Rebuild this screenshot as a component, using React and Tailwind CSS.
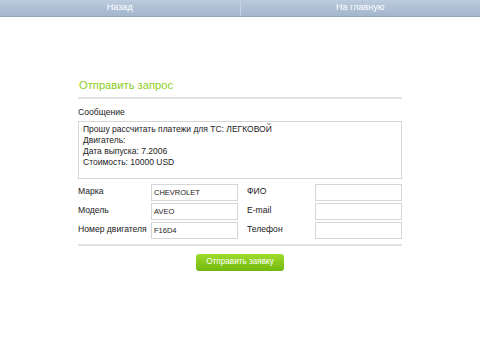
import React from 'react';

const font = { fontFamily: '"Liberation Sans", Arial, sans-serif' };

const Field = ({ label, value }) => (
  <div className="flex items-center h-[19px]">
    <span className="w-[73px] text-[8.6px] text-[#222] -mt-[2px]">{label}</span>
    <div className="w-[87px] h-[17px] border border-[#d6d6d6] bg-white flex items-center px-[2px] text-[7.5px] text-[#222]">
      {value}
    </div>
  </div>
);

const App = () => {
  return (
    <div className="w-[480px] h-[360px] bg-white" style={font}>
      <div className="flex h-[17px] bg-gradient-to-b from-[#bccbdd] to-[#a3b6cd] border-b border-[#8fa3bd]">
        <div className="flex-1 flex items-center justify-center text-[9px] text-white border-r border-[#c8d4e2]">Назад</div>
        <div className="flex-1 flex items-center justify-center text-[9px] text-white">На главную</div>
      </div>

      <div className="w-[324px] mx-auto pt-[62px]">
        <h2 className="text-[11.2px] leading-[12px] text-[#8fcc1c] px-[1px]">Отправить запрос</h2>
        <div className="mt-[6px] h-[2px] bg-[#e2e2e2]" />
        <div className="mt-[8px] text-[8.6px] leading-[11px] text-[#222]">Сообщение</div>
        <div className="mt-[3px] h-[58px] border border-[#d6d6d6] px-[4px] pt-[2px] text-[8.5px] leading-[11px] text-[#222]">
          <div>Прошу рассчитать платежи для ТС: ЛЕГКОВОЙ</div>
          <div>Двигатель:</div>
          <div>Дата выпуска: 7.2006</div>
          <div>Стоимость: 10000 USD</div>
        </div>
        <div className="mt-[4px] flex">
          <div className="w-[169px]">
            <Field label="Марка" value="CHEVROLET" />
            <Field label="Модель" value="AVEO" />
            <Field label="Номер двигателя" value="F16D4" />
          </div>
          <div className="flex-1 [&>div>span]:w-[68px]">
            <Field label="ФИО" value="" />
            <Field label="E-mail" value="" />
            <Field label="Телефон" value="" />
          </div>
        </div>
        <div className="mt-[4px] h-[2px] bg-[#e2e2e2]" />
        <div className="mt-[8px] flex justify-center">
          <button className="w-[88px] h-[17px] rounded-[3px] bg-gradient-to-b from-[#9fdc2a] to-[#72b80c] text-[8.2px] text-white flex items-center justify-center">
            Отправить заявку
          </button>
        </div>
      </div>
    </div>
  );
};

export default App;
